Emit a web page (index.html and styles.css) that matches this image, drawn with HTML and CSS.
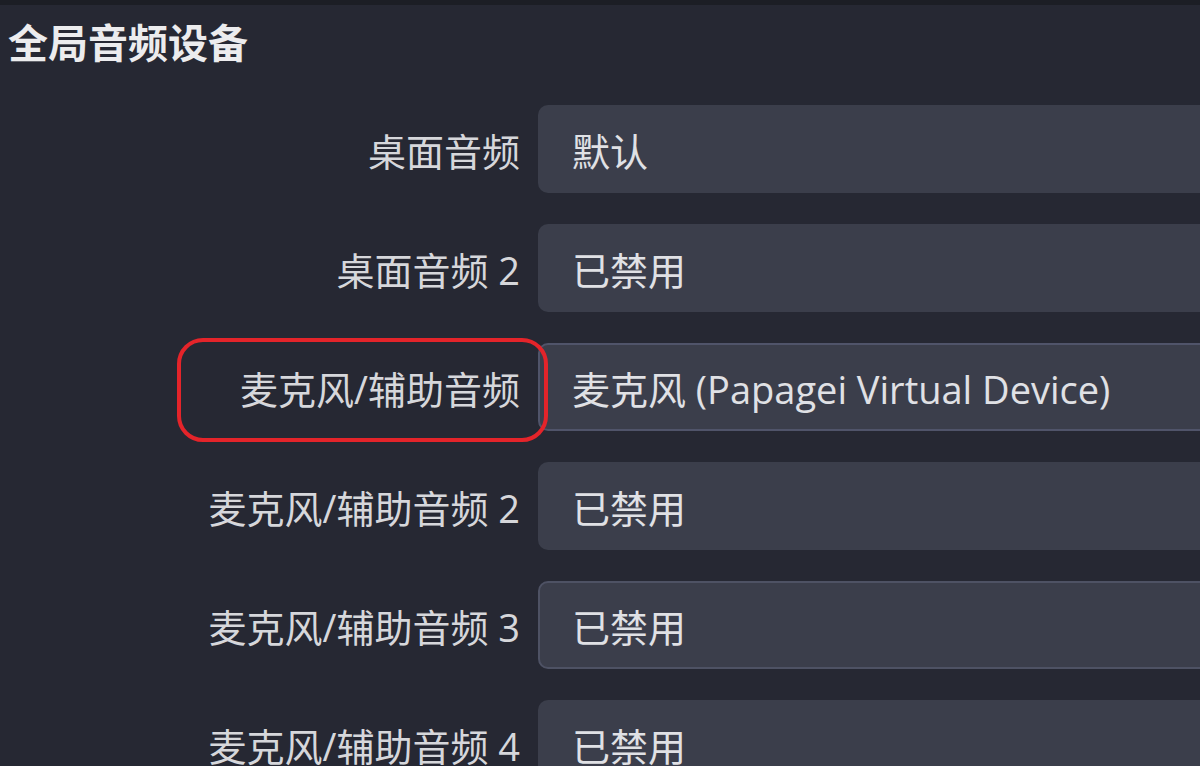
FILE: index.html
```html
<!DOCTYPE html>
<html lang="zh-CN">
<head>
<meta charset="utf-8">
<title>全局音频设备</title>
<link rel="stylesheet" href="styles.css">
</head>
<body>
<div class="topbar"></div>
<section class="panel">
  <h2 class="heading">全局音频设备</h2>
  <div class="form">
    <div class="label">桌面音频</div>
    <div class="field">默认</div>

    <div class="label">桌面音频 2</div>
    <div class="field">已禁用</div>

    <div class="label label-marked">麦克风/辅助音频<span class="highlight"></span></div>
    <div class="field field-focus">麦克风 (Papagei Virtual Device)</div>

    <div class="label">麦克风/辅助音频 2</div>
    <div class="field">已禁用</div>

    <div class="label">麦克风/辅助音频 3</div>
    <div class="field field-hover">已禁用</div>

    <div class="label">麦克风/辅助音频 4</div>
    <div class="field">已禁用</div>
  </div>
</section>
</body>
</html>
```

FILE: styles.css
```css
html, body {
  margin: 0;
  padding: 0;
  background: #262833;
  overflow: hidden;
  width: 1200px;
  height: 766px;
}

body {
  font-family: "Open Sans", "Noto Sans CJK SC", sans-serif;
  color: #dadbdf;
}

.topbar {
  height: 5px;
  background: #1c1e25;
}

.panel {
  display: flex;
  flex-direction: column;
}

.heading {
  margin: 14px 0 0 0;
  padding-left: 8px;
  font-size: 40px;
  line-height: 48px;
  font-weight: 700;
  color: #ececee;
}

.form {
  margin-top: 38px;
  display: grid;
  grid-template-columns: 520px 700px;
  grid-auto-rows: 88px;
  column-gap: 18px;
  row-gap: 31px;
}

.label {
  display: flex;
  align-items: center;
  justify-content: flex-end;
  font-size: 38px;
  color: #d6d7db;
  white-space: nowrap;
}

.label-marked {
  position: relative;
}

.highlight {
  position: absolute;
  left: 177px;
  top: -5px;
  width: 371px;
  height: 104px;
  box-sizing: border-box;
  border: 4px solid #e4242a;
  border-radius: 26px;
  z-index: 2;
}

.field {
  display: flex;
  align-items: center;
  padding-left: 34px;
  box-sizing: border-box;
  background: #3b3e4b;
  border-radius: 10px;
  font-size: 38px;
  color: #e0e1e5;
  white-space: nowrap;
}

.field-focus {
  border: 2px solid #50546a;
  padding-left: 32px;
}

.field-hover {
  border: 2px solid #4e5264;
  padding-left: 32px;
}
```
